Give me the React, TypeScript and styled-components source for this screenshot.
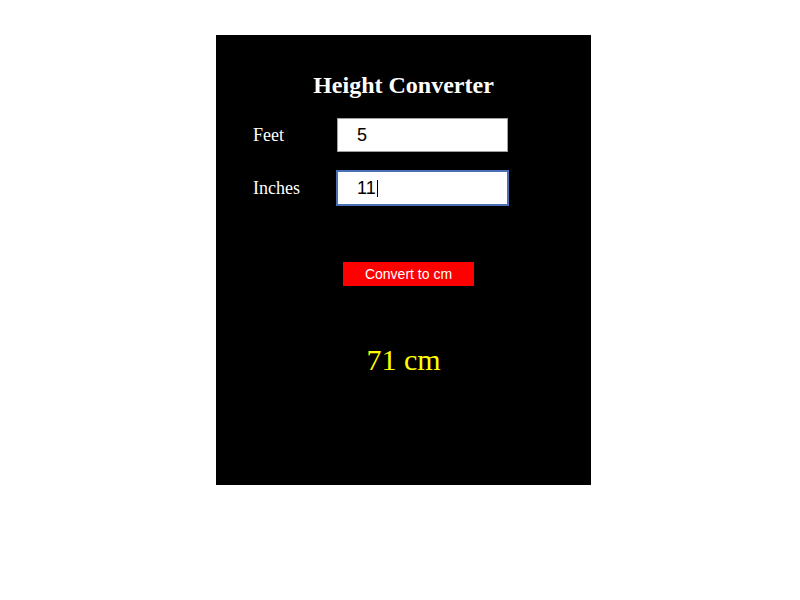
import React, { useEffect, useRef, useState } from 'react'
import styled, { createGlobalStyle } from 'styled-components'

const GlobalStyle = createGlobalStyle`
  html, body {
    margin: 0;
    padding: 0;
    background: #ffffff;
  }
`

const Page = styled.div`
  padding: 35px 0 0 216px;
`

const Panel = styled.div`
  box-sizing: border-box;
  width: 375px;
  height: 450px;
  background: #000000;
  padding: 36px 0 0 37px;
  display: flex;
  flex-direction: column;
  font-family: 'Liberation Serif', 'Times New Roman', serif;
  color: #ffffff;
`

const Title = styled.h1`
  margin: 0 0 19px -37px;
  font-size: 24px;
  line-height: 28px;
  font-weight: bold;
  text-align: center;
`

const FormRow = styled.div`
  display: grid;
  grid-template-columns: 84px 171px;
  align-items: center;
  margin-bottom: 19px;
`

const Label = styled.label`
  font-size: 18px;
  line-height: 22px;
`

const FieldWrap = styled.div`
  position: relative;
  width: 171px;
  height: 34px;
`

const Field = styled.input<{ $active?: boolean }>`
  box-sizing: border-box;
  width: 171px;
  height: 34px;
  margin: 0;
  padding: 0 0 0 19px;
  border: 1px solid ${(p) => (p.$active ? '#4a6fb5' : '#a0a0a0')};
  outline: ${(p) => (p.$active ? '1px solid #4a6fb5' : 'none')};
  background: #ffffff;
  color: #000000;
  caret-color: ${(p) => (p.$active ? 'transparent' : '#000000')};
  font-family: 'Liberation Sans', Arial, sans-serif;
  font-size: 18px;
  &:focus {
    outline: 1px solid #4a6fb5;
    border-color: #4a6fb5;
  }
`

const Caret = styled.span`
  position: absolute;
  left: 40px;
  top: 9px;
  width: 1px;
  height: 17px;
  background: #000000;
  pointer-events: none;
`

const ButtonRow = styled.div`
  display: flex;
  justify-content: center;
  margin: 38px 0 0 -37px;
  padding-left: 10px;
`

const ConvertButton = styled.button`
  width: 131px;
  height: 24px;
  padding: 0;
  border: none;
  background: #ff0000;
  color: #ffffff;
  font-family: 'Liberation Sans', Arial, sans-serif;
  font-size: 14px;
  cursor: pointer;
`

const Result = styled.div`
  margin: 57px 0 0 -37px;
  text-align: center;
  font-size: 30px;
  line-height: 34px;
  color: #ffff00;
`

export default function App() {
  const [feet, setFeet] = useState('5')
  const [inches, setInches] = useState('11')
  const [result, setResult] = useState('71 cm')
  const inchesRef = useRef<HTMLInputElement>(null)

  useEffect(() => {
    const el = inchesRef.current
    if (el) {
      el.focus()
      el.setSelectionRange(el.value.length, el.value.length)
    }
  }, [])

  const convert = () => {
    const total = (parseFloat(feet) || 0) * 12 + (parseFloat(inches) || 0)
    setResult(`${Math.round(total * 2.54)} cm`)
  }

  return (
    <Page>
      <GlobalStyle />
      <Panel>
        <Title>Height Converter</Title>
        <FormRow>
          <Label htmlFor="feet">Feet</Label>
          <Field id="feet" value={feet} onChange={(e) => setFeet(e.target.value)} />
        </FormRow>
        <FormRow>
          <Label htmlFor="inches">Inches</Label>
          <FieldWrap>
            <Field
              id="inches"
              ref={inchesRef}
              $active
              value={inches}
              onChange={(e) => setInches(e.target.value)}
            />
            <Caret />
          </FieldWrap>
        </FormRow>
        <ButtonRow>
          <ConvertButton onClick={convert}>Convert to cm</ConvertButton>
        </ButtonRow>
        <Result>{result}</Result>
      </Panel>
    </Page>
  )
}
